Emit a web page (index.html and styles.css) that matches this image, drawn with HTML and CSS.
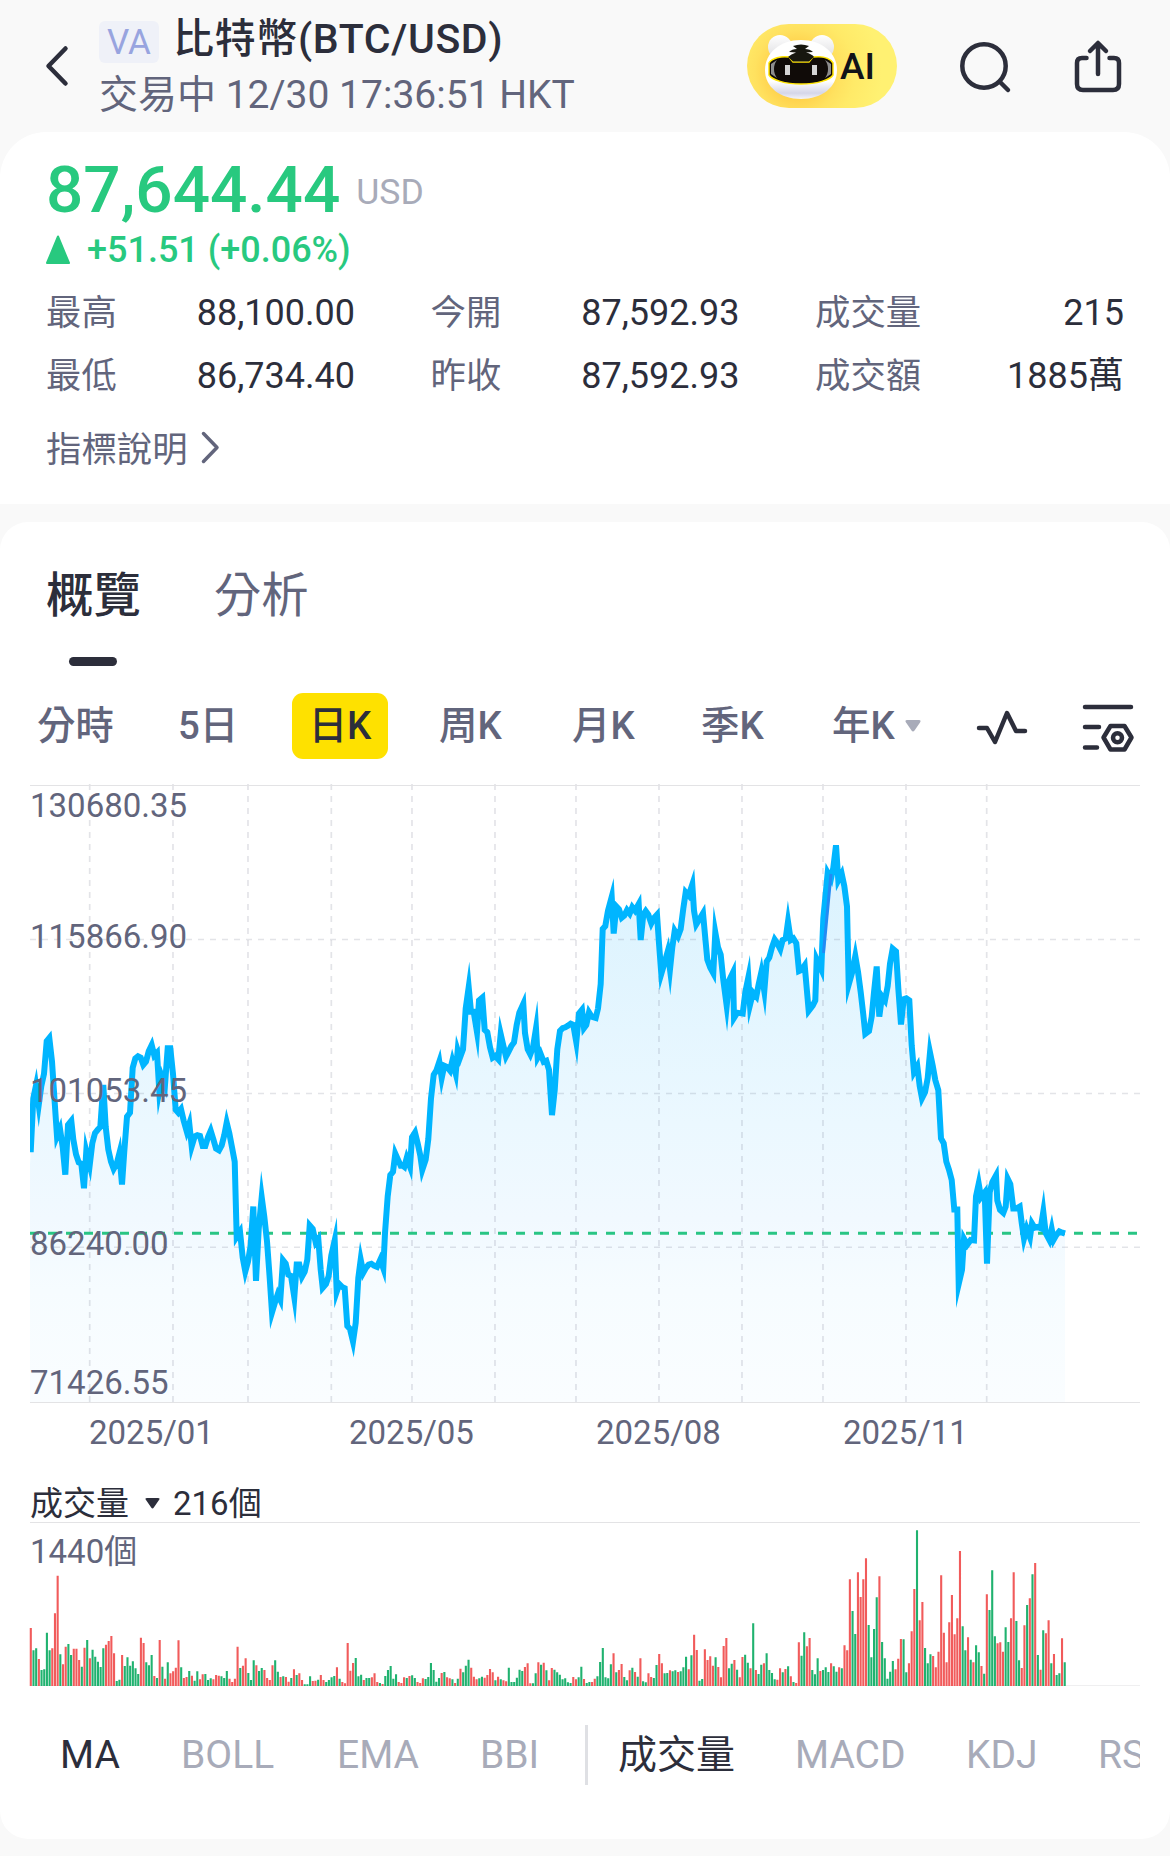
FILE: index.html
```html
<!DOCTYPE html>
<html lang="zh-Hant">
<head>
<meta charset="utf-8">
<title>比特幣(BTC/USD)</title>
<link rel="stylesheet" href="styles.css">
</head>
<body>
<header class="topbar">
  <svg class="back" width="30" height="50" viewBox="0 0 30 50"><path d="M21.500 7.500 4.500 25 21.500 42.500"/></svg>
  <div class="heading">
    <div class="title-row"><span class="badge">VA</span><h1>比特幣(BTC/USD)</h1></div>
    <div class="status">交易中 12/30 17:36:51 HKT</div>
  </div>
  <div class="ai-pill">
    <svg width="74" height="70" viewBox="0 0 74 70">
      <defs>
        <linearGradient id="head" x1="0" y1="0" x2="0" y2="1"><stop offset=".7" stop-color="#fff"/><stop offset=".9" stop-color="#d5d6e8"/><stop offset="1" stop-color="#f4f4fa"/></linearGradient>
        <linearGradient id="ear" x1="0" y1="0" x2="0" y2="1"><stop offset="0" stop-color="#fff"/><stop offset="1" stop-color="#dcdce0"/></linearGradient>
      </defs>
      <circle cx="15" cy="16" r="12" fill="url(#ear)"/><circle cx="57" cy="16" r="12" fill="url(#ear)"/>
      <path d="M36 9C57 9 72 22 72 39S57 68 36 68 0 56 0 39 15 9 36 9Z" fill="url(#head)"/>
      <path d="M4 32C7 27 16 25 24 26L28 31H44L48 26C57 25 65 27 68 32V44C65 49 52 53 36 53S7 49 4 44Z" fill="#100b08" stroke="#ffe400" stroke-width="1.500"/>
      <path d="M12 29 6 33V43L12 47C8 42 8 34 12 29ZM60 29 66 33V43L60 47C64 42 64 34 60 29Z" fill="#8d8d8d"/>
      <path d="M28 15Q36 12 44 15L40 18Q45 18 48 21L41 21.500Q47 23 49 26L44 30.500H28L23 26Q26 23 31 21.500L24 21Q27 18 32 18Z" fill="#17170f"/>
      <path d="M20 34h5v10h-5zM47 34h5v10h-5z" fill="#d5d5d5"/>
    </svg>
    <span>AI</span>
  </div>
  <svg class="icon search" width="60" height="60" viewBox="0 0 60 60"><circle cx="30" cy="30" r="21.700"/><path d="M46 46 54 54"/></svg>
  <svg class="icon" width="60" height="60" viewBox="0 0 60 60"><path d="M30 38V8M22 15 30 7 38 15M18.500 22H14Q9 22 9 27V48Q9 54 15 54H45Q51 54 51 48V27Q51 22 46 22H41.500"/></svg>
</header>

<section class="card quote">
  <div class="price">87,644.44<span>USD</span></div>
  <div class="change"><svg width="26" height="30" viewBox="0 0 26 30"><path d="M12 1.500 23 28H1Z"/></svg>+51.51 (+0.06%)</div>
  <dl class="stats">
    <div><dt>最高</dt><dd>88,100.00</dd></div>
    <div><dt>今開</dt><dd>87,592.93</dd></div>
    <div><dt>成交量</dt><dd>215</dd></div>
    <div><dt>最低</dt><dd>86,734.40</dd></div>
    <div><dt>昨收</dt><dd>87,592.93</dd></div>
    <div><dt>成交額</dt><dd>1885萬</dd></div>
  </dl>
  <div class="explain">指標說明<svg width="20" height="36" viewBox="0 0 20 36"><path d="M2.500 4.500 16 18.500 2.500 32.500"/></svg></div>
</section>

<section class="card market">
  <nav class="tabs"><a class="active">概覽</a><a>分析</a></nav>
  <nav class="periods">
    <a>分時</a><a>5日</a><a class="active">日K</a><a>周K</a><a>月K</a><a>季K</a>
    <a class="year">年K<svg width="18" height="14" viewBox="0 0 18 14"><path d="M3 1H15Q17.500 1 16 3.500L10.500 11.500Q9 13.500 7.500 11.500L2 3.500Q.5 1 3 1Z"/></svg></a>
    <svg class="icon" width="56" height="44" viewBox="0 0 56 44"><path d="M4 24H12L20 38 32 9 41 27H50"/></svg>
    <svg class="icon" width="56" height="52" viewBox="0 0 56 52"><path d="M4 7H50M4 27H18M4 47.500H16M29.500 26H43.500L50.500 37.500 43.500 49.500H29.500L22.500 37.500Z"/><circle cx="36.500" cy="37.800" r="4.500"/></svg>
  </nav>
  <svg class="chart" id="price-chart" width="1110" height="700" viewBox="0 0 1110 700">
    <defs>
      <linearGradient id="area" gradientUnits="userSpaceOnUse" x1="0" y1="60" x2="0" y2="618">
        <stop offset="0" stop-color="#d9f2fe"/><stop offset=".5" stop-color="#ebf8ff"/><stop offset=".67" stop-color="#f1f9ff"/><stop offset=".8" stop-color="#f6fcff"/><stop offset="1" stop-color="#fafdff"/>
      </linearGradient>
      <clipPath id="plot"><rect width="1110" height="619"/></clipPath>
    </defs>
    <path class="area"/>
    <g class="grid"></g>
    <path class="frame" d="M0 1.500H1110M0 618.500H1110"/>
    <path class="last" d="M0 449.300H1110"/>
    <path class="line" clip-path="url(#plot)"/>
    <path class="overlap" d="M793.500 169 801 90"/>
    <g class="axis">
      <text x="0" y="33">130680.35</text><text x="0" y="164">115866.90</text><text x="0" y="318">101053.45</text><text x="0" y="471">86240.00</text><text x="0" y="610">71426.55</text>
      <text x="59" y="660">2025/01</text><text x="319" y="660">2025/05</text><text x="566" y="660">2025/08</text><text x="813" y="660">2025/11</text>
    </g>
  </svg>
  <div class="volume-head">成交量<svg width="17" height="13" viewBox="0 0 17 13"><path d="M3 1H14Q16.500 1 15 3L9.800 10.500Q8.500 12.500 7.200 10.500L2 3Q.5 1 3 1Z"/></svg>216個</div>
  <svg class="chart" id="volume-chart" width="1110" height="166" viewBox="0 0 1110 166">
    <path class="frame" d="M0 .5H1110"/><path class="base" d="M0 163.500H1110"/>
    <g class="axis"><text x="0" y="41">1440個</text></g>
    <path class="down"/><path class="up"/>
  </svg>
  <nav class="indicators">
    <a class="active">MA</a><a>BOLL</a><a>EMA</a><a>BBI</a><i></i><a class="active">成交量</a><a>MACD</a><a>KDJ</a><a>RSI</a>
  </nav>
</section>
<script src="charts.js"></script>
</body>
</html>
```
FILE: styles.css
```css
* { box-sizing: border-box; }
body {
  margin: 0; width: 1170px; height: 1856px; overflow: hidden;
  background: #f9f9f9; color: #2c2e3b;
  font-family: Roboto, "Noto Sans CJK TC", sans-serif; white-space: nowrap;
}
svg { display: block; flex: none; }
.topbar { display: flex; align-items: center; height: 132px; padding-left: 44px; }
.back { fill: none; stroke: #2c2e3b; stroke-width: 4.5; stroke-linecap: round; stroke-linejoin: round; }
.heading { width: 648px; margin-left: 25px; }
.title-row { display: flex; align-items: center; height: 56px; margin-top: 2px; }
.badge { width: 60px; height: 42px; margin-top: 5px; border-radius: 6px; background: #eff1f8; color: #98a4df; font-size: 35px; line-height: 43px; text-align: center; }
h1 { margin: 0 0 0 14px; font-size: 41px; line-height: 56px; font-weight: 500; letter-spacing: .65px; }
.status { color: #62657c; font-size: 39px; line-height: 56px; }
.ai-pill {
  display: flex; align-items: center; width: 150px; height: 84px; padding-left: 18px; border-radius: 42px;
  background: radial-gradient(circle at 50px 48px, #ffd04a 25px, #ffe15f 42px, #ffea68 58px, #fff172 85px);
  color: #111318; font-size: 37px; font-weight: 500;
}
.ai-pill span { margin-left: 1px; }
.icon { fill: none; stroke: #2c2e3b; stroke-width: 4.5; stroke-linecap: round; stroke-linejoin: round; }
.search { margin: 0 54px 0 57px; }
.card { background: #fff; }
.quote { height: 372px; padding: 19px 46px 0; border-radius: 46px 46px 0 0; }
.price { height: 77px; line-height: 78px; font-size: 65.7px; font-weight: 500; color: #28c97f; }
.price span { margin-left: 16px; font-size: 35.6px; font-weight: 400; line-height: 1; vertical-align: 8px; color: #a8abb9; }
.change { display: flex; align-items: center; height: 44px; font-size: 36px; font-weight: 500; color: #28c97f; }
.change svg { margin-right: 15px; }
.change path { fill: #28c97f; stroke: #28c97f; stroke-width: 2; stroke-linejoin: round; }
.stats { display: grid; grid-template-columns: repeat(3, 309px); column-gap: 75.5px; margin: 10px 0 0; font-size: 36px; line-height: 63px; }
.stats div { display: flex; justify-content: space-between; }
.stats dt { color: #62657c; font-size: 35.4px; }
.stats dd { margin: 0; }
.explain { display: flex; align-items: center; height: 49px; margin-top: 14px; font-size: 35.4px; color: #62657c; }
.explain svg { margin-left: 13px; }
.explain path { fill: none; stroke: #62657c; stroke-width: 3.5; stroke-linecap: round; stroke-linejoin: round; }
.market { height: 1317px; margin-top: 18px; padding: 40px 30px 0; border-radius: 28px; }
.tabs { display: flex; gap: 73px; height: 131px; padding-left: 16px; font-size: 47.4px; line-height: 68px; color: #62657c; }
.tabs .active { color: #2c2e3b; font-weight: 500; }
.tabs .active::after { content: ""; display: block; width: 48px; height: 9px; margin: 27px auto 0; border-radius: 5px; background: #2c2e3b; }
.tabs a { font-weight: 400; }
.periods { display: grid; grid-template-columns: 141px 114px 147px 133px 129px 131px 143px 106px 60px; align-items: center; height: 66px; padding-left: 7px; font-size: 38.4px; font-weight: 500; line-height: 66px; color: #62657c; }
.periods .active { width: 96px; border-radius: 11px; background: #fee100; color: #2c2e3b; text-align: center; }
.year { display: flex; align-items: center; }
.year svg { margin-left: 9px; fill: #a8abb9; }
.chart { margin-top: 25px; overflow: visible; }
.frame, .base { stroke: #e3e3e5; stroke-width: 1.2; }
.base { stroke: #efeff0; }
.area { fill: url(#area); }
.grid path { fill: none; stroke: #505a6e; stroke-opacity: .16; }
.grid .h { stroke-width: 1.5; stroke-dasharray: 6; }
.grid .v { stroke-width: 1.7; stroke-dasharray: 6; }
.last { stroke: #29c584; stroke-width: 3; stroke-dasharray: 9; }
.line { fill: none; stroke: #00b5ff; stroke-width: 6; stroke-miterlimit: 10; }
.overlap { stroke: #238bf4; stroke-width: 3; }
.axis { fill: #62657c; font-size: 33px; }
.volume-head { display: flex; align-items: center; height: 37px; margin-top: 1px; font-size: 33px; line-height: 37px; }
.volume-head svg { margin: 0 12px 0 15px; fill: #2c2e3b; }
#volume-chart { margin-top: 0; }
.down { stroke: #f15b5b; stroke-width: 2.1; }
.up { stroke: #20b26f; stroke-width: 2.1; }
.indicators { display: grid; grid-template-columns: 121px 156px 143px 105px 33px 177px 171px 132px 60px; align-items: center; overflow: hidden; height: 60px; margin-top: 37px; padding-left: 30px; font-size: 39px; line-height: 60px; color: #a8abb9; }
.indicators .active { color: #2c2e3b; }
.indicators i { width: 3px; height: 60px; background: #dfe0e4; }
```
FILE: charts.js
```javascript
// Closing-price trace, in three consecutive runs of x,y samples with the x offset of each run.
// A starred sample gives the height that the pointed tip of the stroke reaches there.
const runs = [
  [0, "32,912 40,780 48,705* 56,850* 64,750 72,720 80,640 88,632 96,690 104,790 111,905* 120,827* 128,900 136,967 144,845 154,835 160,880 168,917 176,937 184,940 192,1000 199,860* 209,985* 217,890 225,865 233,857 241,850 250,747 257,850 265,905 273,935 281,970* 290,940 298,915 306,991 313,910 321,825 330,815 338,705 346,682 354,677 362,680 370,712* 378,690 386,665 395,628* 403,675 411,668 418,822* 426,700* 435,780* 443,657 451,657 459,720 467,808 475,815 483,790* 491,835 500,885* 508,808* 515,935* 524,873 532,870 540,872 548,897 556,897 564,875 572,838* 580,880 588,903 597,918* 605,895 613,870 620,805* 628,865 636,900 644,935 650,1143* 660,1085* 668,1170 676,1237* 684,1180 692,1140 700,1045 708,1227 716,1100 725,958* 733,1070 741,1130 749,1220 756,1345* 765,1280 773,1260 781,1302* 789,1157* 797,1185 805,1212 813,1215 823,1333* 830,1187 838,1187 846,1237* 854,1205 862,1175 869,1073* 878,1100 887,1150* 895,1105* 902,1200 908,1262* 918,1235 926,1215 934,1165 944,1070* 950,1293* 958,1235 966,1242 974,1245 982,1338 990,1345 999,1415* 1007,1330 1015,1220 1022,1130* 1030,1228* 1038,1195 1046,1187 1054,1185 1062,1190 1071,1193 1081,1155* 1090,1235* 1095,1110 1103,1020 1111,968 1119,960 1126,888* 1134,930 1142,945"],
  [1140, "8,945 13,948 20,902* 30,982* 36,875 45,845* 53,890 61,920 67,988* 77,930 85,880 93,780 101,722 109,712 118,658* 125,772* 133,700 141,703 150,712 157,658* 167,763* 173,625* 180,680 189,660 197,560 206,445* 213,568 221,568 231,683* 237,540 247,533 254,612 262,618 270,655 278,680 286,676 295,702* 302,577* 310,650 318,698* 326,665 334,652 342,643 350,600 358,570 370,518* 375,620 383,660 391,690* 399,655 408,540* 413,680 421,652* 431,700* 439,688 447,710 456,821 464,760 472,660 480,615 488,608 496,606 504,602 512,597 520,600 529,698* 537,572 546,545* 552,627* 559,600 567,550* 575,580 587,583 594,560 602,500 608,365 616,358 624,320 635,240* 641,376 649,310 657,317 665,350* 673,332 681,305* 689,342* 697,297* 705,320 716,278* 722,392 730,330 737,308* 745,330 754,370* 762,338 771,330 777,400 784,515* 793,450 803,383* 810,527* 817,410 824,348* 834,400* 842,365 850,315 857,275 866,283 877,218* 882,320 889,375* 899,340 909,303* 915,380 922,440 931,460 940,500* 946,308* 954,410 962,428 970,490 980,617* 988,490 999,440* 1002,607* 1012,570 1020,571 1028,572 1036,520 1045,428* 1050,600* 1059,505* 1069,547* 1076,500 1084,432* 1093,580* 1100,445 1108,435 1116,410 1124,375* 1132,400 1141,435* 1148,392 1157,388"],
  [2280, "24,295* 32,392 40,388 49,400 57,468 65,465 74,433* 80,510 86,585* 98,553 106,540 110,408* 124,495* 130,340 143,203* 153,262* 160,215 168,160 175,273* 185,208* 193,260 201,310 206,550* 217,470 226,390* 234,470 242,520 250,575 256,622 267,615 275,580 282,520 290,457 298,580 306,530 315,540 323,505 330,450 338,413 348,420 355,510 363,599 371,537 379,535 388,540 395,650 402,740* 412,678* 419,750 426,802* 435,765 443,730 450,617* 458,700 466,735 475,760 483,878 491,890 499,935 507,955 515,980 523,1052 532,1052 536,1293* 546,1200 552,1098* 562,1152* 572,1127 582,1128 588,1020 596,950* 603,1040* 614,990* 621,1185 629,1010 637,985 648,942* 652,1030 660,1053 670,1073* 677,1045 683,950* 691,990 700,1050 709,1050 719,1033* 725,1085 732,1160* 740,1075* 750,1150* 756,1065* 764,1097 773,1095 782,1098 790,1003* 797,1110 808,1148* 815,1100 821,1147* 829,1115 838,1097* 847,1109 855,1111"]
];
const halfStroke = 3;
const samples = runs.flatMap(([offset, list]) => list.split(" ").map(item => {
  const [x, y] = item.replace("*", "").split(",").map(Number);
  const py = y / 2.45 - 4;
  return { x: (x + offset) / 3 - 10, y: py, tip: item.endsWith("*") ? py : null };
}));

// A mitered join reaches past its vertex: pull each starred vertex back by that reach.
const isPeak = samples.map((p, i) => p.tip !== null && i > 0 && p.y < (samples[i - 1].y + samples[i + 1].y) / 2);
for (let pass = 0; pass < 8; pass++) {
  samples.forEach((p, i) => {
    if (p.tip === null) return;
    const a = samples[i - 1], b = samples[i + 1], sign = isPeak[i] ? 1 : -1;
    let near = 0, far = Math.max(4, Math.min((a.y - p.tip) * sign, (b.y - p.tip) * sign));
    for (let step = 0; step < 20; step++) {
      const depth = (near + far) / 2, y = p.tip + sign * depth;
      const left = Math.atan2(p.x - a.x, (a.y - y) * sign), right = Math.atan2(b.x - p.x, (b.y - y) * sign);
      const reach = halfStroke / Math.sin(Math.max(0.05, (left + right) / 2)) * Math.cos((right - left) / 2);
      if (reach > depth) near = depth; else far = depth;
    }
    p.y = p.tip + sign * near;
  });
}

const trace = "M" + samples.map(p => p.x.toFixed(1) + " " + p.y.toFixed(1)).join("L");
const price = document.getElementById("price-chart");
price.querySelector(".line").setAttribute("d", trace);
price.querySelector(".area").setAttribute("d", trace + "V618H0V380Z");

const rows = [155.6, 309.5, 463.3].map(y => `<path class="h" d="M0 ${y}H1110"/>`);
const columns = [59.7, 143, 218, 301.3, 382, 465, 546, 629, 712, 793, 876, 956.7].map(x => `<path class="v" d="M${x} 0V618"/>`);
price.querySelector(".grid").innerHTML = rows.concat(columns).join("");

// Daily volume: r = down day, g = up day, the number is the bar's top in thirds of a pixel.
const volume = "r444 g511 g505 r537 g570 g568 g458 g511 r505 r400 r287 g523 r553 r500 g492 g525 r506 r506 r540 g560 r503 g480 r535 g509 g530 g545 g561 g505 r494 r483 r468 r520 g603 g599 r525 g558 g532 g557 g544 g565 g582 r473 r489 g547 g556 g525 r588 g594 r480 g560 r596 g547 r580 r574 r563 r481 g562 r594 r591 g573 r587 g602 g574 r598 r583 g582 g600 g595 r598 r585 r587 g589 g594 g573 r596 r606 r596 r500 g564 r557 r535 g579 g600 g541 r556 g573 g564 r570 r594 r600 r556 g541 g575 r591 g589 r591 r605 g594 r568 g585 r580 r600 g613 g613 g589 r603 r602 g599 r585 r600 g606 g600 g592 g588 r562 g596 r606 r610 r489 r572 r549 g534 g589 g584 r600 g594 g594 r592 r580 r606 g609 r612 g588 g570 g558 g596 g583 r606 r609 r592 g594 r588 g586 g594 r606 r609 r595 g597 g591 g549 g570 g605 g594 r579 g576 r592 r595 g598 r609 g596 r566 g577 g557 g539 r563 r590 r598 g595 g590 r593 r585 r567 r577 g601 r590 g598 r601 r604 g563 g606 g606 g593 g569 g573 r561 r550 r610 g610 g580 r547 g554 r548 g571 r601 r564 g569 g577 g584 g598 g595 g607 g609 r591 r598 g592 g560 r597 g609 g606 r606 r596 g589 g546 g504 g592 g595 g553 r520 g577 r570 r552 g591 g601 r571 g563 r576 g590 r535 g604 g607 r580 r591 g594 g555 r522 r550 g580 g579 r571 g574 g571 r576 g574 g562 g530 r568 g526 r464 r510 g602 g597 r508 r540 r529 r557 g532 r561 r592 r498 r474 g565 g551 r540 g569 r592 r531 g524 g548 r565 g430 r570 g582 g554 r550 g520 g570 g579 g598 r599 r565 g577 r567 g559 r589 g606 r609 r487 g527 g457 r499 r474 g570 g583 g535 r573 g570 g562 g576 r550 g559 g575 r562 g565 r496 r511 r298 g393 g462 r277 r351 r298 r235 g435 g532 g447 g352 r289 g486 g535 g596 g575 g543 r568 r536 r477 g478 g577 r550 r454 r327 g151 r421 r366 g504 g550 g523 r528 r562 r515 r286 r458 r547 r427 r345 r463 r415 r213 g439 g511 r472 g539 r547 g496 g517 r558 g581 r343 g390 g271 g469 r490 r487 r515 g442 g486 r415 r277 g423 g541 r564 r436 g375 r355 g283 r249 g525 r569 g451 r460 r421 g550 r522 g585 g580 r475 g547".split(" ");
const bars = { r: "", g: "" };
volume.forEach((bar, i) => {
  const x = 0.8 + i * 2.6855;
  bars[bar[0]] += `M${x.toFixed(2)} 164V${(bar.slice(1) / 3 - 42).toFixed(1)}`;
});
document.querySelector(".down").setAttribute("d", bars.r);
document.querySelector(".up").setAttribute("d", bars.g);
```
